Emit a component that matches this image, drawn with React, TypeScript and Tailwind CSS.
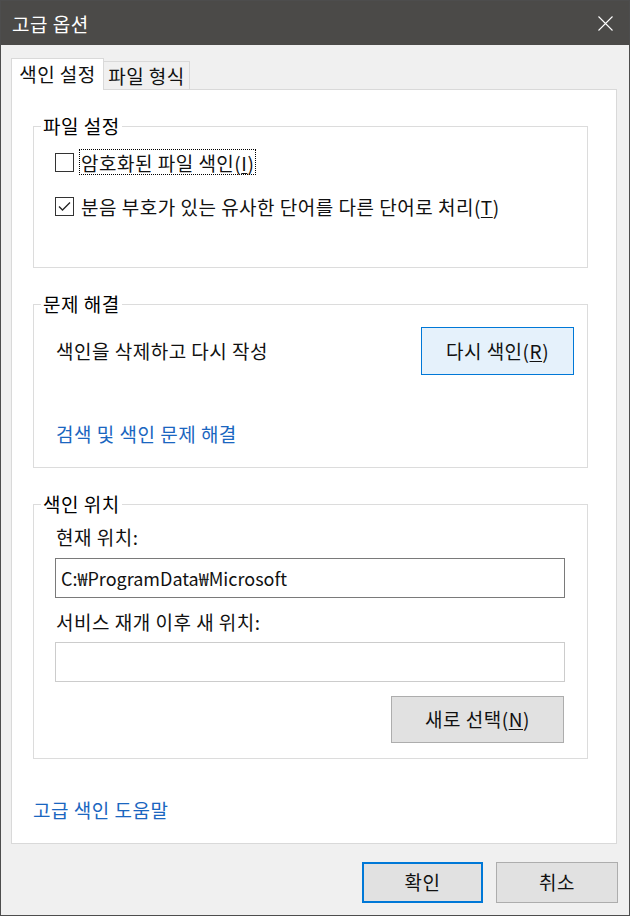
// Windows 10 "고급 옵션" dialog (Indexing Options > Advanced)
import React from 'react';

const font = "font-['Noto_Sans_CJK_KR','Noto_Sans',sans-serif]";

function Mnemonic({ text, letter }: { text: string; letter: string }) {
  return (
    <>
      {text}(<span className="underline underline-offset-2">{letter}</span>)
    </>
  );
}

function Checkbox({ checked }: { checked?: boolean }) {
  return (
    <div className="w-[19px] h-[19px] border border-[#333333] bg-white flex items-center justify-center shrink-0">
      {checked && (
        <svg width="15" height="15" viewBox="0 0 15 15">
          <polyline points="2,7.5 5.5,11 13,3.5" fill="none" stroke="#222" strokeWidth="1.3" />
        </svg>
      )}
    </div>
  );
}

function Group({ title, children, className = '' }: { title: string; children: React.ReactNode; className?: string }) {
  return (
    <fieldset className={`w-[555px] border border-[#dcdcdc] ${className}`}>
      <legend className="ml-[7px] px-[2px] leading-[22px] text-black">{title}</legend>
      {children}
    </fieldset>
  );
}

export default function App() {
  return (
    <div className={`w-[630px] h-[916px] border border-[#4d4d4d] bg-[#f0f0f0] flex flex-col text-[19px] tracking-[0.5px] text-[#111] ${font}`}>
      {/* Title bar */}
      <div className="h-[44px] bg-[#4b4a48] flex items-center justify-between pl-[11px] pr-[16px] shrink-0">
        <span className="text-white leading-none">고급 옵션</span>
        <svg width="15" height="15" viewBox="0 0 15 15">
          <path d="M0.5 0.5 L14.5 14.5 M14.5 0.5 L0.5 14.5" stroke="#ffffff" strokeWidth="1.1" />
        </svg>
      </div>

      <div className="px-[10px] pt-[13px] flex flex-col">
        {/* Tabs */}
        <div className="flex items-end h-[32px]">
          <div className="w-[93px] h-[32px] border border-b-0 border-[#d9d9d9] bg-white relative z-10 flex items-center justify-center pb-[1px]">
            색인 설정
          </div>
          <div className="w-[86px] h-[29px] border border-b-0 border-l-0 border-[#d9d9d9] bg-[#f0f0f0] flex items-center justify-center">
            파일 형식
          </div>
        </div>

        {/* Tab panel */}
        <div className="-mt-px w-[606px] h-[755px] border border-[#d9d9d9] bg-white pl-[21px] pt-[25px] flex flex-col">
          <Group title="파일 설정" className="pb-[48px]">
            <div className="mt-[12px] pl-[21px] flex flex-col gap-[18px]">
              <div className="flex items-center h-[26px]">
                <Checkbox />
                <span className="ml-[5px] h-[26px] flex items-center px-[1px] border border-dotted border-black leading-none">
                  <Mnemonic text="암호화된 파일 색인" letter="I" />
                </span>
              </div>
              <div className="flex items-center h-[26px]">
                <Checkbox checked />
                <span className="ml-[5px] h-[26px] flex items-center px-[1px] border border-transparent leading-none">
                  <Mnemonic text="분음 부호가 있는 유사한 단어를 다른 단어로 처리" letter="T" />
                </span>
              </div>
            </div>
          </Group>

          <Group title="문제 해결" className="mt-[25px] pb-[22px]">
            <div className="mt-[12px] pl-[22px] pr-[13px] flex items-center justify-between">
              <span>색인을 삭제하고 다시 작성</span>
              <button className="w-[153px] h-[48px] border border-[#0078d7] bg-[#e5f1fb] flex items-center justify-center">
                <Mnemonic text="다시 색인" letter="R" />
              </button>
            </div>
            <div className="mt-[48px] pl-[22px] leading-[22px] text-[#1a66c0]">검색 및 색인 문제 해결</div>
          </Group>

          <Group title="색인 위치" className="mt-[25px] pb-[15px]">
            <div className="pl-[21px] w-[531px] flex flex-col">
              <div className="mt-[11px] pl-[1px] leading-[22px]">현재 위치:</div>
              <div className="mt-[10px] h-[40px] border border-[#7a7a7a] bg-white flex items-center pl-[5px] text-[18px] tracking-normal">
                C:₩ProgramData₩Microsoft
              </div>
              <div className="mt-[13px] pl-[1px] leading-[22px]">서비스 재개 이후 새 위치:</div>
              <div className="mt-[9px] h-[40px] border border-[#cccccc] bg-white" />
              <button className="mt-[14px] self-end mr-[1px] w-[173px] h-[47px] border border-[#adadad] bg-[#e1e1e1] flex items-center justify-center">
                <Mnemonic text="새로 선택" letter="N" />
              </button>
            </div>
          </Group>

          <div className="mt-[40px] leading-[22px] text-[#1a66c0]">고급 색인 도움말</div>
        </div>

        {/* Dialog buttons */}
        <div className="w-[607px] mt-[18px] flex justify-end gap-[13px]">
          <button className="w-[121px] h-[41px] border-2 border-[#0078d7] bg-[#e1e1e1] flex items-center justify-center">
            확인
          </button>
          <button className="w-[122px] h-[41px] border border-[#adadad] bg-[#e1e1e1] flex items-center justify-center">
            취소
          </button>
        </div>
      </div>
    </div>
  );
}
